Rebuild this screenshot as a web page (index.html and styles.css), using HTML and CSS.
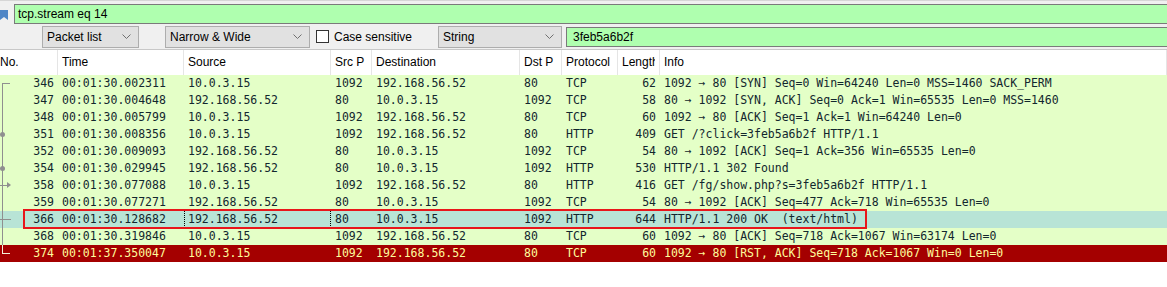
FILE: index.html
```html
<!DOCTYPE html>
<html lang="en">
<head>
  <meta charset="UTF-8" />
  <title>Wireshark - tcp.stream eq 14</title>
  <link rel="stylesheet" href="styles.css">
</head>
<body>
  <!-- display filter -->
  <div class="filter-bar">
    <span class="bookmark">
      <svg width="12" height="20" viewBox="0 0 12 20"><path d="M0 6 H8 V16 L4 13 L0 16 Z" fill="#4f86c6"/></svg>
    </span>
    <div class="filter-input">tcp.stream eq 14</div>
  </div>

  <!-- find packet toolbar -->
  <div class="find-bar">
    <div class="combo combo-list">Packet list <svg class="chev" width="9" height="5"><polyline points="0.5,0.5 4.5,4.5 8.5,0.5" /></svg></div>
    <div class="combo combo-charset">Narrow &amp; Wide <svg class="chev" width="9" height="5"><polyline points="0.5,0.5 4.5,4.5 8.5,0.5" /></svg></div>
    <label class="check"><span class="box"></span>Case sensitive</label>
    <div class="combo combo-type">String <svg class="chev" width="9" height="5"><polyline points="0.5,0.5 4.5,4.5 8.5,0.5" /></svg></div>
    <div class="find-input">3feb5a6b2f</div>
  </div>

  <!-- packet list -->
  <div class="packet-list">
    <div class="row head">
      <div class="cell no-head"><span>No.</span></div>
      <div class="cell"><span>Time</span></div>
      <div class="cell"><span>Source</span></div>
      <div class="cell"><span>Src P</span></div>
      <div class="cell"><span>Destination</span></div>
      <div class="cell"><span>Dst P</span></div>
      <div class="cell"><span>Protocol</span></div>
      <div class="cell"><span>Length</span></div>
      <div class="cell"><span>Info</span></div>
    </div>

    <div class="row pkt ok">
      <div class="cell num"><span class="tree first"></span>346</div>
      <div class="cell">00:01:30.002311</div><div class="cell">10.0.3.15</div><div class="cell">1092</div>
      <div class="cell">192.168.56.52</div><div class="cell">80</div><div class="cell">TCP</div>
      <div class="cell len">62</div><div class="cell info">1092 → 80 [SYN] Seq=0 Win=64240 Len=0 MSS=1460 SACK_PERM</div>
    </div>
    <div class="row pkt ok">
      <div class="cell num"><span class="tree"></span>347</div>
      <div class="cell">00:01:30.004648</div><div class="cell">192.168.56.52</div><div class="cell">80</div>
      <div class="cell">10.0.3.15</div><div class="cell">1092</div><div class="cell">TCP</div>
      <div class="cell len">58</div><div class="cell info">80 → 1092 [SYN, ACK] Seq=0 Ack=1 Win=65535 Len=0 MSS=1460</div>
    </div>
    <div class="row pkt ok">
      <div class="cell num"><span class="tree"></span>348</div>
      <div class="cell">00:01:30.005799</div><div class="cell">10.0.3.15</div><div class="cell">1092</div>
      <div class="cell">192.168.56.52</div><div class="cell">80</div><div class="cell">TCP</div>
      <div class="cell len">60</div><div class="cell info">1092 → 80 [ACK] Seq=1 Ack=1 Win=64240 Len=0</div>
    </div>
    <div class="row pkt ok">
      <div class="cell num"><span class="tree dot"></span>351</div>
      <div class="cell">00:01:30.008356</div><div class="cell">10.0.3.15</div><div class="cell">1092</div>
      <div class="cell">192.168.56.52</div><div class="cell">80</div><div class="cell">HTTP</div>
      <div class="cell len">409</div><div class="cell info">GET /?click=3feb5a6b2f HTTP/1.1</div>
    </div>
    <div class="row pkt ok">
      <div class="cell num"><span class="tree"></span>352</div>
      <div class="cell">00:01:30.009093</div><div class="cell">192.168.56.52</div><div class="cell">80</div>
      <div class="cell">10.0.3.15</div><div class="cell">1092</div><div class="cell">TCP</div>
      <div class="cell len">54</div><div class="cell info">80 → 1092 [ACK] Seq=1 Ack=356 Win=65535 Len=0</div>
    </div>
    <div class="row pkt ok">
      <div class="cell num"><span class="tree dot"></span>354</div>
      <div class="cell">00:01:30.029945</div><div class="cell">192.168.56.52</div><div class="cell">80</div>
      <div class="cell">10.0.3.15</div><div class="cell">1092</div><div class="cell">HTTP</div>
      <div class="cell len">530</div><div class="cell info">HTTP/1.1 302 Found</div>
    </div>
    <div class="row pkt ok">
      <div class="cell num"><span class="tree arrow"></span>358</div>
      <div class="cell">00:01:30.077088</div><div class="cell">10.0.3.15</div><div class="cell">1092</div>
      <div class="cell">192.168.56.52</div><div class="cell">80</div><div class="cell">HTTP</div>
      <div class="cell len">416</div><div class="cell info">GET /fg/show.php?s=3feb5a6b2f HTTP/1.1</div>
    </div>
    <div class="row pkt ok">
      <div class="cell num"><span class="tree"></span>359</div>
      <div class="cell">00:01:30.077271</div><div class="cell">192.168.56.52</div><div class="cell">80</div>
      <div class="cell">10.0.3.15</div><div class="cell">1092</div><div class="cell">TCP</div>
      <div class="cell len">54</div><div class="cell info">80 → 1092 [ACK] Seq=477 Ack=718 Win=65535 Len=0</div>
    </div>
    <div class="row pkt sel">
      <div class="cell num"><span class="tree cur"></span>366</div>
      <div class="cell">00:01:30.128682</div><div class="cell focus">192.168.56.52</div><div class="cell">80</div>
      <div class="cell">10.0.3.15</div><div class="cell">1092</div><div class="cell">HTTP</div>
      <div class="cell len">644</div><div class="cell info">HTTP/1.1 200 OK  (text/html)</div>
    </div>
    <div class="row pkt ok">
      <div class="cell num"><span class="tree"></span>368</div>
      <div class="cell">00:01:30.319846</div><div class="cell">10.0.3.15</div><div class="cell">1092</div>
      <div class="cell">192.168.56.52</div><div class="cell">80</div><div class="cell">TCP</div>
      <div class="cell len">60</div><div class="cell info">1092 → 80 [ACK] Seq=718 Ack=1067 Win=63174 Len=0</div>
    </div>
    <div class="row pkt rst">
      <div class="cell num"><span class="tree last"></span>374</div>
      <div class="cell">00:01:37.350047</div><div class="cell">10.0.3.15</div><div class="cell">1092</div>
      <div class="cell">192.168.56.52</div><div class="cell">80</div><div class="cell">TCP</div>
      <div class="cell len">60</div><div class="cell info">1092 → 80 [RST, ACK] Seq=718 Ack=1067 Win=0 Len=0</div>
    </div>

    <!-- red highlight drawn over the selected packet -->
    <div class="annotation"></div>
  </div>
</body>
</html>
```

FILE: styles.css
```css
* { box-sizing: border-box; margin: 0; padding: 0; }

body {
  font-family: 'Liberation Sans', Arial, sans-serif;
  font-size: 12px;
  color: #000;
  background: #fff;
  overflow: hidden;
}

/* display filter */
.filter-bar {
  display: flex;
  height: 24px;
  padding-top: 3px;
  background: #f0f0f0;
  border-top: 1px solid #d6d6d6;
}

.bookmark {
  width: 14px;
  flex: none;
}

.filter-input {
  flex: 1;
  height: 20px;
  line-height: 18px;
  padding-left: 3px;
  background: #afffaf;
  border: 1px solid #7a7a7a;
  border-right: none;
}

/* find toolbar */
.find-bar {
  display: flex;
  align-items: center;
  height: 26px;
  padding-left: 42px;
  background: #f0f0f0;
  border-bottom: 1px solid #c8c8c8;
}

.combo {
  display: flex;
  align-items: center;
  justify-content: space-between;
  height: 22px;
  padding: 0 7px 0 4px;
  background: #e1e1e1;
  border: 1px solid #adadad;
  flex: none;
}

.combo-list { width: 97px; }
.combo-charset { width: 145px; margin-left: 26px; }
.combo-type { width: 124px; }

.chev polyline {
  fill: none;
  stroke: #707070;
  stroke-width: 1;
}

.check {
  display: flex;
  align-items: center;
  width: 122px;
  margin-left: 6px;
  flex: none;
}

.check .box {
  width: 13px;
  height: 13px;
  margin-right: 5px;
  background: #fff;
  border: 1px solid #333;
}

.find-input {
  flex: 1;
  height: 20px;
  line-height: 18px;
  margin-left: 4px;
  padding-left: 6px;
  background: #afffaf;
  border: 1px solid #7a7a7a;
  border-right: none;
}

/* packet list */
.packet-list {
  position: relative;
}

.row {
  display: grid;
  grid-template-columns: 58px 126px 147px 41px 148px 42px 56px 42px 1fr;
}

.head {
  height: 25px;
  line-height: 25px;
  background: #fff;
}

.head .cell {
  padding: 0 4px;
  border-right: 1px solid #e5e5e5;
}

.head .cell span {
  display: block;
  overflow: hidden;
  white-space: nowrap;
}

.head .no-head { padding-left: 0; }

.pkt {
  height: 17px;
  line-height: 17px;
  font-family: 'DejaVu Sans Mono', monospace;
  font-size: 11.5px;
  color: #12272e;
}

.pkt .cell {
  padding: 0 4px;
  overflow: hidden;
  white-space: pre;
}

.pkt .num {
  display: flex;
  justify-content: space-between;
  padding-left: 0;
}

.pkt .len { text-align: right; }

.ok { background: #e4ffc7; }
.sel { background: #b8e4d6; }
.rst { background: #a40000; color: #fffc9c; }

.sel .focus {
  border-left: 1px dotted #000;
  border-right: 1px dotted #000;
  padding-left: 3px;
}

/* conversation tree in the No. column */
.tree {
  position: relative;
  width: 12px;
  height: 17px;
  flex: none;
  background: linear-gradient(#8f8f8f, #8f8f8f) 2px 0 / 1px 100% no-repeat;
}

.tree.first { background-position: 2px 8px; }

.tree.first::after,
.tree.last::after,
.tree.cur::after {
  content: '';
  position: absolute;
  left: 2px;
  top: 8px;
  width: 8px;
  border-top: 1px solid #8f8f8f;
}

.tree.cur::after { left: 0; width: 11px; }

.tree.last {
  background: linear-gradient(#f4f0d8, #f4f0d8) 2px 0 / 1px 9px no-repeat;
}

.tree.last::after { border-color: #f4f0d8; }

.tree.dot::after {
  content: '';
  position: absolute;
  left: 0;
  top: 6px;
  width: 5px;
  height: 5px;
  border-radius: 50%;
  background: #8f8f8f;
}

.tree.arrow::before {
  content: '';
  position: absolute;
  left: 0;
  top: 8px;
  width: 7px;
  border-top: 1px solid #8f8f8f;
}

.tree.arrow::after {
  content: '';
  position: absolute;
  left: 7px;
  top: 5px;
  border-left: 4px solid #8f8f8f;
  border-top: 3.5px solid transparent;
  border-bottom: 3.5px solid transparent;
}

.annotation {
  position: absolute;
  left: 23px;
  top: 159px;
  width: 844px;
  height: 20px;
  border: 2px solid #e8161b;
}
```
